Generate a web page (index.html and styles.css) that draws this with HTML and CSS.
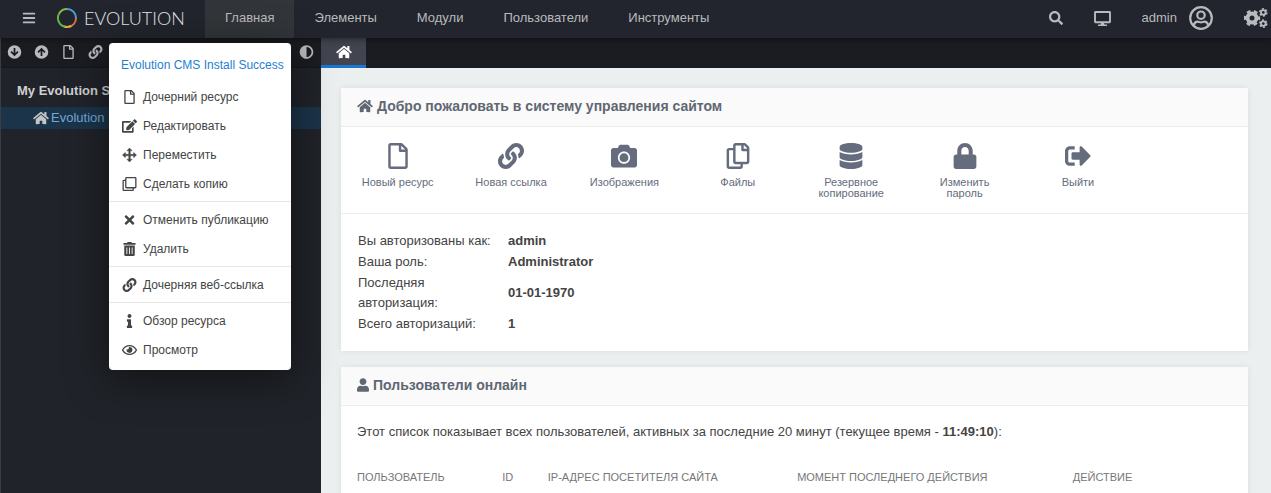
FILE: index.html
```html
<!DOCTYPE html>
<html lang="ru">
<head>
  <meta charset="UTF-8" />
  <meta name="viewport" content="width=device-width, initial-scale=1.0"/>
  <title>Evolution CMS</title>
  <link rel="stylesheet" href="styles.css">
</head>
<body>
  <!-- Icons -->
  <svg class="sprite" aria-hidden="true">
    <symbol id="i-bars" viewBox="0 0 448 512"><path d="M16 132h416c9 0 16-7 16-16V76c0-9-7-16-16-16H16C7 60 0 67 0 76v40c0 9 7 16 16 16zm0 160h416c9 0 16-7 16-16v-40c0-9-7-16-16-16H16c-9 0-16 7-16 16v40c0 9 7 16 16 16zm0 160h416c9 0 16-7 16-16v-40c0-9-7-16-16-16H16c-9 0-16 7-16 16v40c0 9 7 16 16 16z"/></symbol>
    <symbol id="i-down" viewBox="0 0 512 512"><path fill-rule="evenodd" d="M256 8a248 248 0 1 1 0 496a248 248 0 1 1 0-496zM224 110v184l-72-72-44 44 148 148 148-148-44-44-72 72V110z"/></symbol>
    <symbol id="i-up" viewBox="0 0 512 512"><path fill-rule="evenodd" d="M256 8a248 248 0 1 1 0 496a248 248 0 1 1 0-496zM224 402V218l-72 72-44-44L256 98l148 148-44 44-72-72v184z"/></symbol>
    <symbol id="i-file" viewBox="0 0 384 512"><path d="M369.9 97.9L286 14C277 5 264.8-.1 252.1-.1H48C21.5 0 0 21.5 0 48v416c0 26.5 21.5 48 48 48h288c26.5 0 48-21.5 48-48V131.9c0-12.7-5.1-25-14.1-34zM332.1 128H256V51.9l76.1 76.1zM48 464V48h160v104c0 13.3 10.7 24 24 24h104v288H48z"/></symbol>
    <symbol id="i-link" viewBox="0 0 512 512"><path d="M326.612 185.391c59.747 59.809 58.927 155.698.36 214.59-.11.12-.24.25-.36.37l-67.2 67.2c-59.27 59.27-155.699 59.262-214.96 0-59.27-59.26-59.27-155.7 0-214.96l37.106-37.106c9.84-9.84 26.786-3.3 27.294 10.606.648 17.722 3.826 35.527 9.69 52.721 1.986 5.822.567 12.262-3.783 16.612l-13.087 13.087c-28.026 28.026-28.905 73.66-1.155 101.96 28.024 28.579 74.086 28.749 102.325.51l67.2-67.19c28.191-28.191 28.073-73.757 0-101.83-3.701-3.694-7.429-6.564-10.341-8.569a16.037 16.037 0 0 1-6.947-12.606c-.396-10.567 3.348-21.456 11.698-29.806l21.054-21.055c5.521-5.521 14.182-6.199 20.584-1.731a152.482 152.482 0 0 1 20.522 17.197zM467.547 44.449c-59.261-59.262-155.69-59.27-214.96 0l-67.2 67.2c-.12.12-.25.25-.36.37-58.566 58.892-59.387 154.781.36 214.59a152.454 152.454 0 0 0 20.521 17.196c6.402 4.468 15.064 3.789 20.584-1.731l21.054-21.055c8.35-8.35 12.094-19.239 11.698-29.806a16.037 16.037 0 0 0-6.947-12.606c-2.912-2.005-6.64-4.875-10.341-8.569-28.073-28.073-28.191-73.639 0-101.83l67.2-67.19c28.239-28.239 74.3-28.069 102.325.51 27.75 28.3 26.872 73.934-1.155 101.96l-13.087 13.087c-4.35 4.35-5.769 10.79-3.783 16.612 5.864 17.194 9.042 34.999 9.69 52.721.509 13.906 17.454 20.446 27.294 10.606l37.106-37.106c59.271-59.259 59.271-155.699.001-214.959z"/></symbol>
    <symbol id="i-adjust" viewBox="0 0 512 512"><path d="M8 256c0 136.966 111.033 248 248 248s248-111.034 248-248S392.966 8 256 8 8 119.033 8 256zm248 184V72c101.705 0 184 82.311 184 184 0 101.705-82.311 184-184 184z"/></symbol>
    <symbol id="i-home" viewBox="0 0 576 512"><path d="M280.37 148.26L96 300.11V464a16 16 0 0 0 16 16l112.06-.29a16 16 0 0 0 15.92-16V368a16 16 0 0 1 16-16h64a16 16 0 0 1 16 16v95.64a16 16 0 0 0 16 16.05L464 480a16 16 0 0 0 16-16V300L295.67 148.26a12.19 12.19 0 0 0-15.3 0zM571.6 251.47L488 182.56V44.05a12 12 0 0 0-12-12h-56a12 12 0 0 0-12 12v72.61L318.47 43a48 48 0 0 0-61 0L4.34 251.47a12 12 0 0 0-1.6 16.9l25.5 31A12 12 0 0 0 45.15 301l235.22-193.74a12.19 12.19 0 0 1 15.3 0L530.9 301a12 12 0 0 0 16.9-1.6l25.5-31a12 12 0 0 0-1.7-16.93z"/></symbol>
    <symbol id="i-search" viewBox="0 0 512 512"><path d="M505 442.7L405.3 343c-4.5-4.5-10.6-7-17-7H372c27.6-35.3 44-79.7 44-128C416 93.1 322.9 0 208 0S0 93.1 0 208s93.1 208 208 208c48.3 0 92.7-16.4 128-44v16.3c0 6.4 2.5 12.5 7 17l99.7 99.7c9.4 9.4 24.6 9.4 33.9 0l28.3-28.3c9.4-9.4 9.4-24.6.1-34zM208 336c-70.7 0-128-57.2-128-128 0-70.7 57.2-128 128-128 70.7 0 128 57.2 128 128 0 70.7-57.2 128-128 128z"/></symbol>
    <symbol id="i-desktop" viewBox="0 0 576 512"><path d="M528 0H48C21.5 0 0 21.5 0 48v320c0 26.5 21.5 48 48 48h192l-16 48h-72c-13.3 0-24 10.7-24 24s10.7 24 24 24h272c13.3 0 24-10.7 24-24s-10.7-24-24-24h-72l-16-48h192c26.5 0 48-21.5 48-48V48c0-26.5-21.5-48-48-48zm-16 352H64V64h448v288z"/></symbol>
    <symbol id="i-avatar" viewBox="0 0 24 24"><g fill="none" stroke="currentColor" stroke-width="2.2"><circle cx="12" cy="12" r="10.8"/><circle cx="12" cy="9.2" r="3.7"/><path d="M4.6 19.3c.8-2.4 2.2-3.6 4-3.6 1.2 0 2 .6 3.4.6s2.200-.6 3.400-.6c1.800 0 3.200 1.200 4 3.600"/></g></symbol>
    <symbol id="i-cogs" viewBox="0 0 24 20">
      <circle cx="8" cy="10" r="4.5" fill="none" stroke="currentColor" stroke-width="4"/>
      <circle cx="8" cy="10" r="7" fill="none" stroke="currentColor" stroke-width="2.4" stroke-dasharray="3.8 3.53" stroke-dashoffset="1.9"/>
      <circle cx="19.300" cy="4.400" r="2.300" fill="none" stroke="currentColor" stroke-width="1.800"/>
      <circle cx="19.300" cy="4.400" r="3.500" fill="none" stroke="currentColor" stroke-width="1.600" stroke-dasharray="2 1.665"/>
      <circle cx="19.300" cy="15.600" r="2.300" fill="none" stroke="currentColor" stroke-width="1.800"/>
      <circle cx="19.300" cy="15.600" r="3.500" fill="none" stroke="currentColor" stroke-width="1.600" stroke-dasharray="2 1.665"/>
    </symbol>
    <symbol id="i-edit" viewBox="0 0 576 512"><path d="M402.6 83.2l90.2 90.2c3.8 3.8 3.8 10 0 13.8L274.4 405.6l-92.8 10.3c-12.4 1.4-22.9-9.1-21.5-21.5l10.3-92.8L388.8 83.2c3.8-3.8 10-3.8 13.8 0zm162-22.9l-48.8-48.8c-15.2-15.2-39.9-15.2-55.2 0l-35.4 35.4c-3.8 3.8-3.8 10 0 13.8l90.2 90.2c3.8 3.8 10 3.8 13.8 0l35.4-35.4c15.2-15.3 15.2-40 0-55.2zM384 346.2V448H64V128h229.8c3.2 0 6.2-1.3 8.5-3.5l40-40c7.6-7.6 2.2-20.5-8.5-20.5H48C21.5 64 0 85.5 0 112v352c0 26.5 21.5 48 48 48h352c26.5 0 48-21.5 48-48V306.2c0-10.7-12.9-16-20.5-8.5l-40 40c-2.2 2.3-3.5 5.3-3.5 8.5z"/></symbol>
    <symbol id="i-move" viewBox="0 0 512 512"><path d="M256 0l96 104h-68v124h124v-68l104 96-104 96v-68H284v124h68l-96 104-96-104h68V284H104v68L0 256l104-96v68h124V104h-68z" stroke="currentColor" stroke-width="16"/></symbol>
    <symbol id="i-clone" viewBox="0 0 512 512"><path fill-rule="evenodd" d="M144 0h320a48 48 0 0 1 48 48v320a48 48 0 0 1-48 48H144a48 48 0 0 1-48-48V48a48 48 0 0 1 48-48zM144 48v320h320V48zM48 96h48v48H48v320h320v-48h48v48a48 48 0 0 1-48 48H48a48 48 0 0 1-48-48V144a48 48 0 0 1 48-48z"/></symbol>
    <symbol id="i-times" viewBox="0 0 352 512"><path d="M242.72 256l100.07-100.07c12.28-12.28 12.28-32.19 0-44.48l-22.24-22.24c-12.28-12.28-32.19-12.28-44.48 0L176 189.28 75.93 89.21c-12.28-12.28-32.19-12.28-44.48 0L9.21 111.45c-12.28 12.28-12.28 32.19 0 44.48L109.28 256 9.21 356.07c-12.28 12.28-12.28 32.19 0 44.48l22.24 22.24c12.28 12.28 32.2 12.28 44.48 0L176 322.72l100.07 100.07c12.28 12.28 32.2 12.28 44.48 0l22.24-22.24c12.28-12.28 12.28-32.19 0-44.48L242.72 256z"/></symbol>
    <symbol id="i-trash" viewBox="0 0 448 512"><path d="M32 464a48 48 0 0 0 48 48h288a48 48 0 0 0 48-48V128H32zm272-256a16 16 0 0 1 32 0v224a16 16 0 0 1-32 0zm-96 0a16 16 0 0 1 32 0v224a16 16 0 0 1-32 0zm-96 0a16 16 0 0 1 32 0v224a16 16 0 0 1-32 0zM432 32H312l-9.4-18.7A24 24 0 0 0 281.1 0H166.8a23.72 23.72 0 0 0-21.4 13.3L136 32H16A16 16 0 0 0 0 48v32a16 16 0 0 0 16 16h416a16 16 0 0 0 16-16V48a16 16 0 0 0-16-16z"/></symbol>
    <symbol id="i-info" viewBox="0 0 192 512"><path d="M20 424.229h20V279.771H20c-11.046 0-20-8.954-20-20V212c0-11.046 8.954-20 20-20h112c11.046 0 20 8.954 20 20v212.229h20c11.046 0 20 8.954 20 20V492c0 11.046-8.954 20-20 20H20c-11.046 0-20-8.954-20-20v-47.771c0-11.046 8.954-20 20-20zM96 0C56.235 0 24 32.235 24 72s32.235 72 72 72 72-32.235 72-72S135.764 0 96 0z"/></symbol>
    <symbol id="i-eye" viewBox="0 0 576 512"><path d="M288 144a110.94 110.94 0 0 0-31.24 5 55.4 55.4 0 0 1 7.24 27 56 56 0 0 1-56 56 55.4 55.4 0 0 1-27-7.24A111.71 111.71 0 1 0 288 144zm284.52 97.4C518.29 135.59 410.93 64 288 64S57.68 135.64 3.48 241.41a32.35 32.35 0 0 0 0 29.19C57.71 376.41 165.07 448 288 448s230.32-71.64 284.52-177.41a32.35 32.35 0 0 0 0-29.19zM288 400c-98.65 0-189.09-55-237.93-144C98.91 167 189.34 112 288 112s189.09 55 237.93 144C477.1 345 386.66 400 288 400z"/></symbol>
    <symbol id="i-camera" viewBox="0 0 512 512"><path d="M512 144v288c0 26.5-21.5 48-48 48H48c-26.5 0-48-21.5-48-48V144c0-26.5 21.5-48 48-48h88l12.3-32.9c7-18.7 24.9-31.1 44.9-31.1h125.5c20 0 37.9 12.4 44.9 31.1L376 96h88c26.5 0 48 21.5 48 48zM376 288c0-66.2-53.8-120-120-120s-120 53.8-120 120 53.8 120 120 120 120-53.8 120-120zm-32 0c0 48.5-39.5 88-88 88s-88-39.5-88-88 39.5-88 88-88 88 39.5 88 88z"/></symbol>
    <symbol id="i-copy" viewBox="0 0 448 512"><path d="M433.941 65.941l-51.882-51.882A48 48 0 0 0 348.118 0H176c-26.51 0-48 21.49-48 48v48H48c-26.51 0-48 21.49-48 48v320c0 26.51 21.49 48 48 48h224c26.51 0 48-21.49 48-48v-48h80c26.51 0 48-21.49 48-48V99.882a48 48 0 0 0-14.059-33.941zM266 464H54a6 6 0 0 1-6-6V150a6 6 0 0 1 6-6h74v224c0 26.51 21.49 48 48 48h96v42a6 6 0 0 1-6 6zm128-96H182a6 6 0 0 1-6-6V54a6 6 0 0 1 6-6h106v88c0 13.255 10.745 24 24 24h88v202a6 6 0 0 1-6 6zm6-256h-64V48h9.632c1.591 0 3.117.632 4.243 1.757l48.368 48.368a6 6 0 0 1 1.757 4.243V112z"/></symbol>
    <symbol id="i-database" viewBox="0 0 448 512"><path d="M448 73.143v45.714C448 159.143 347.667 192 224 192S0 159.143 0 118.857V73.143C0 32.857 100.333 0 224 0s224 32.857 224 73.143zM448 176v102.857C448 319.143 347.667 352 224 352S0 319.143 0 278.857V176c48.125 33.143 136.208 48.572 224 48.572S399.874 209.143 448 176zm0 160v102.857C448 479.143 347.667 512 224 512S0 479.143 0 438.857V336c48.125 33.143 136.208 48.572 224 48.572S399.874 369.143 448 336z"/></symbol>
    <symbol id="i-lock" viewBox="0 0 448 512"><path d="M400 224h-24v-72C376 68.2 307.8 0 224 0S72 68.2 72 152v72H48c-26.5 0-48 21.5-48 48v192c0 26.5 21.5 48 48 48h352c26.5 0 48-21.5 48-48V272c0-26.5-21.5-48-48-48zm-104 0H152v-72c0-39.7 32.3-72 72-72s72 32.3 72 72v72z"/></symbol>
    <symbol id="i-exit" viewBox="0 0 512 512"><path d="M497 273L329 441c-15 15-41 4.5-41-17v-96H152c-13.3 0-24-10.7-24-24v-96c0-13.3 10.7-24 24-24h136V88c0-21.4 25.9-32 41-17l168 168c9.3 9.4 9.3 24.6 0 34zM192 436v-40c0-6.6-5.4-12-12-12H96c-17.7 0-32-14.3-32-32V160c0-17.7 14.3-32 32-32h84c6.6 0 12-5.4 12-12V76c0-6.6-5.4-12-12-12H96c-53 0-96 43-96 96v192c0 53 43 96 96 96h84c6.6 0 12-5.4 12-12z"/></symbol>
    <symbol id="i-user" viewBox="0 0 448 512"><path d="M224 256c70.7 0 128-57.3 128-128S294.7 0 224 0 96 57.3 96 128s57.3 128 128 128zm89.6 32h-16.7c-22.2 10.2-46.9 16-72.9 16s-50.6-5.8-72.9-16h-16.7C60.2 288 0 348.2 0 422.4V464c0 26.5 21.5 48 48 48h352c26.5 0 48-21.5 48-48v-41.6c0-74.2-60.2-134.4-134.4-134.4z"/></symbol>
  </svg>

  <div class="app">
    <header class="topbar">
      <button class="menu-toggle" aria-label="Меню"><svg class="icon"><use href="#i-bars"/></svg></button>
      <a class="logo" href="#">
        <svg class="logo-ring" viewBox="0 0 22 22" fill="none" stroke-width="2">
          <path stroke="#4b9fd8" d="M11 2A9 9 0 0 1 20 11"/>
          <path stroke="#e0704a" d="M20 11A9 9 0 0 1 13 19.8"/>
          <path stroke="#e0b040" d="M15 19A9 9 0 0 1 8 19.5"/>
          <path stroke="#5fb548" d="M9 19.8A9 9 0 0 1 3 6.8"/>
          <path stroke="#86b84e" d="M3 6.8A9 9 0 0 1 11 2"/>
        </svg>
        <span>EVOLUTION</span>
      </a>
      <nav class="nav">
        <a class="active" href="#">Главная</a>
        <a href="#">Элементы</a>
        <a href="#">Модули</a>
        <a href="#">Пользователи</a>
        <a href="#">Инструменты</a>
      </nav>
      <div class="tools">
        <button aria-label="Поиск"><svg class="icon"><use href="#i-search"/></svg></button>
        <button aria-label="Просмотр сайта"><svg class="icon icon-wide"><use href="#i-desktop"/></svg></button>
        <a class="account" href="#">admin <svg class="avatar"><use href="#i-avatar"/></svg></a>
        <button aria-label="Настройки"><svg class="cogs"><use href="#i-cogs"/></svg></button>
      </div>
    </header>

    <aside class="sidebar">
      <div class="tree-tools">
        <button aria-label="Развернуть"><svg class="icon"><use href="#i-down"/></svg></button>
        <button aria-label="Свернуть"><svg class="icon"><use href="#i-up"/></svg></button>
        <button aria-label="Новый ресурс"><svg class="icon"><use href="#i-file"/></svg></button>
        <button aria-label="Новая ссылка"><svg class="icon"><use href="#i-link"/></svg></button>
        <button class="theme" aria-label="Тема"><svg class="icon"><use href="#i-adjust"/></svg></button>
      </div>
      <div class="tree">
        <div class="tree-root">My Evolution Site</div>
        <a class="tree-node" href="#"><svg class="icon icon-home"><use href="#i-home"/></svg>Evolution</a>
      </div>

      <div class="context-menu">
        <div class="context-title">Evolution CMS Install Success</div>
        <button><svg class="icon"><use href="#i-file"/></svg>Дочерний ресурс</button>
        <button><svg class="icon"><use href="#i-edit"/></svg>Редактировать</button>
        <button><svg class="icon"><use href="#i-move"/></svg>Переместить</button>
        <button><svg class="icon"><use href="#i-clone"/></svg>Сделать копию</button>
        <hr>
        <button><svg class="icon"><use href="#i-times"/></svg>Отменить публикацию</button>
        <button><svg class="icon"><use href="#i-trash"/></svg>Удалить</button>
        <hr>
        <button><svg class="icon"><use href="#i-link"/></svg>Дочерняя веб-ссылка</button>
        <hr>
        <button><svg class="icon"><use href="#i-info"/></svg>Обзор ресурса</button>
        <button><svg class="icon"><use href="#i-eye"/></svg>Просмотр</button>
      </div>
    </aside>

    <main class="main">
      <div class="tabs">
        <a class="tab" href="#" aria-label="Главная"><svg class="icon icon-home"><use href="#i-home"/></svg></a>
      </div>
      <div class="content">
        <section class="card">
          <h2 class="card-header"><svg class="icon icon-home"><use href="#i-home"/></svg>Добро пожаловать в систему управления сайтом</h2>
          <div class="shortcuts">
            <a href="#"><svg><use href="#i-file"/></svg>Новый ресурс</a>
            <a href="#"><svg><use href="#i-link"/></svg>Новая ссылка</a>
            <a href="#"><svg><use href="#i-camera"/></svg>Изображения</a>
            <a href="#"><svg><use href="#i-copy"/></svg>Файлы</a>
            <a href="#"><svg><use href="#i-database"/></svg>Резервное копирование</a>
            <a href="#"><svg><use href="#i-lock"/></svg>Изменить пароль</a>
            <a href="#"><svg><use href="#i-exit"/></svg>Выйти</a>
          </div>
          <table class="info">
            <tr><th>Вы авторизованы как:</th><td>admin</td></tr>
            <tr><th>Ваша роль:</th><td>Administrator</td></tr>
            <tr><th>Последняя авторизация:</th><td>01-01-1970</td></tr>
            <tr><th>Всего авторизаций:</th><td>1</td></tr>
          </table>
        </section>

        <section class="card">
          <h2 class="card-header"><svg class="icon icon-user"><use href="#i-user"/></svg>Пользователи онлайн</h2>
          <div class="card-body">
            <p>Этот список показывает всех пользователей, активных за последние 20 минут (текущее время - <b>11:49:10</b>):</p>
            <table class="online">
              <thead>
                <tr>
                  <th class="col-user">Пользователь</th>
                  <th class="col-id">ID</th>
                  <th class="col-ip">IP-адрес посетителя сайта</th>
                  <th class="col-time">Момент последнего действия</th>
                  <th>Действие</th>
                </tr>
              </thead>
            </table>
          </div>
        </section>
      </div>
    </main>
  </div>
</body>
</html>
```
FILE: styles.css
```css
* {
  box-sizing: border-box;
}

body {
  margin: 0;
  font-family: "Liberation Sans", Arial, sans-serif;
  font-size: 13px;
  line-height: 20px;
  color: #444;
  background-color: #ebeff0;
}

a {
  color: inherit;
  text-decoration: none;
}

button {
  padding: 0;
  border: none;
  background: none;
  color: inherit;
  font: inherit;
  cursor: pointer;
}

.sprite {
  display: none;
}

.icon {
  width: 14px;
  height: 14px;
  flex: none;
  fill: currentColor;
}

.icon-home {
  width: 16px;
}

.icon-wide {
  width: 17px;
  height: 15px;
}

.icon-user {
  width: 12px;
}

.app {
  display: grid;
  grid-template-columns: 321px 1fr;
  grid-template-rows: 38px 1fr;
  height: 100vh;
  overflow: hidden;
}

/* Top bar */
.topbar {
  position: relative;
  z-index: 1;
  grid-column: 1 / -1;
  display: flex;
  align-items: center;
  padding: 0 3px 2px 22px;
  background-color: #22252d;
  color: #b9babd;
  box-shadow: 0 0 8px rgba(0, 0, 0, 0.6);
}

.menu-toggle,
.tools button {
  display: flex;
}

.logo {
  display: flex;
  align-items: center;
  gap: 6px;
  width: 149px;
  margin-left: 20px;
  font-family: Lato, sans-serif;
  font-size: 18px;
  font-weight: 300;
  color: #e4e5e7;
}

.logo-ring {
  width: 22px;
  height: 22px;
}

.nav {
  display: flex;
  align-self: stretch;
  margin-bottom: -2px;
}

.nav a {
  padding: 0 20px;
  line-height: 36px;
}

.nav .active {
  background-color: #323539;
}

.tools {
  display: flex;
  align-items: center;
  gap: 31px;
  margin-left: auto;
}

.account {
  display: flex;
  align-items: center;
  gap: 12px;
}

.avatar {
  width: 24px;
  height: 24px;
}

.cogs {
  width: 24px;
  height: 20px;
}

/* Resource tree */
.sidebar {
  position: relative;
  border-left: 1px solid #3a3c40;
  background-color: #202329;
}

.tree-tools {
  display: flex;
  align-items: center;
  gap: 12px;
  height: 30px;
  padding: 0 7px 2px 6px;
  border-bottom: 1px solid #16171b;
  background-color: #1b1c21;
  color: #b9babd;
}

.tree-tools button {
  display: flex;
}

.tree-tools .icon {
  width: 15px;
}

.theme {
  margin-left: auto;
}

.tree {
  padding-top: 13px;
}

.tree-root {
  padding: 0 16px;
  margin-bottom: 6px;
  font-weight: bold;
  color: #d0d1d3;
}

.tree-node {
  display: flex;
  align-items: center;
  gap: 2px;
  height: 22px;
  padding-left: 32px;
  background-color: #1c3449;
  color: #70a9d9;
}

.tree-node .icon {
  color: #c3c4c6;
}

/* Context menu */
.context-menu {
  position: absolute;
  top: 5px;
  left: 108px;
  z-index: 2;
  padding: 5px 0 6px;
  width: 182px;
  border-radius: 4px;
  background-color: #fff;
  font-size: 12px;
  box-shadow: 0 8px 40px rgba(0, 0, 0, 0.5);
}

.context-title {
  padding: 0 12px;
  line-height: 34px;
  color: #1f7fd0;
  white-space: nowrap;
}

.context-menu button {
  display: flex;
  align-items: center;
  gap: 6px;
  width: 100%;
  height: 29px;
  padding: 0 13px;
}

.context-menu .icon {
  width: 15px;
}

.context-menu hr {
  margin: 3px 0;
  border: none;
  border-top: 1px solid #e8e8e8;
}

/* Tabs */
.tabs {
  height: 30px;
  background-color: #1b1c21;
}

.tab {
  display: flex;
  justify-content: center;
  align-items: center;
  width: 45px;
  height: 30px;
  border-bottom: 3px solid #1976d2;
  background-color: #424550;
  color: #fff;
}

/* Cards */
.content {
  padding: 20px 23px 0 20px;
}

.card {
  margin-bottom: 16px;
  background-color: #fff;
  box-shadow: 0 0 6px rgba(0, 0, 0, 0.08);
}

.card-header {
  display: flex;
  align-items: center;
  gap: 4px;
  height: 39px;
  margin: 0;
  padding: 0 16px 2px;
  border-bottom: 1px solid #ececec;
  background-color: #fafafa;
  font-size: 14px;
  color: #5f6773;
}

.shortcuts {
  display: grid;
  grid-template-columns: repeat(8, 1fr);
  height: 87px;
  padding-top: 16px;
  border-bottom: 1px solid #ececec;
}

.shortcuts a {
  padding: 0 16px;
  font-size: 11px;
  line-height: 11px;
  text-align: center;
  color: #646c7d;
}

.shortcuts svg {
  display: block;
  width: 28px;
  height: 26px;
  margin: 0 auto 8px;
  fill: currentColor;
}

.info {
  margin: 0 16px;
  padding: 16px 0 17px;
  border-spacing: 0;
}

.info th,
.info td {
  padding: 1px 1px 0;
}

.info th {
  width: 150px;
  font-weight: normal;
  text-align: left;
}

.info td {
  font-weight: bold;
}

.card-body {
  padding: 16px;
}

.card-body p {
  margin: 0 0 25px;
}

.online {
  width: 100%;
  border-spacing: 0;
  table-layout: fixed;
}

.online th {
  padding: 0;
  font-size: 11px;
  font-weight: normal;
  text-align: left;
  text-transform: uppercase;
  color: #777;
}

.col-user {
  width: 16.6%;
}

.col-id {
  width: 5.2%;
}

.col-ip {
  width: 28.5%;
}

.col-time {
  width: 31.5%;
}
```
